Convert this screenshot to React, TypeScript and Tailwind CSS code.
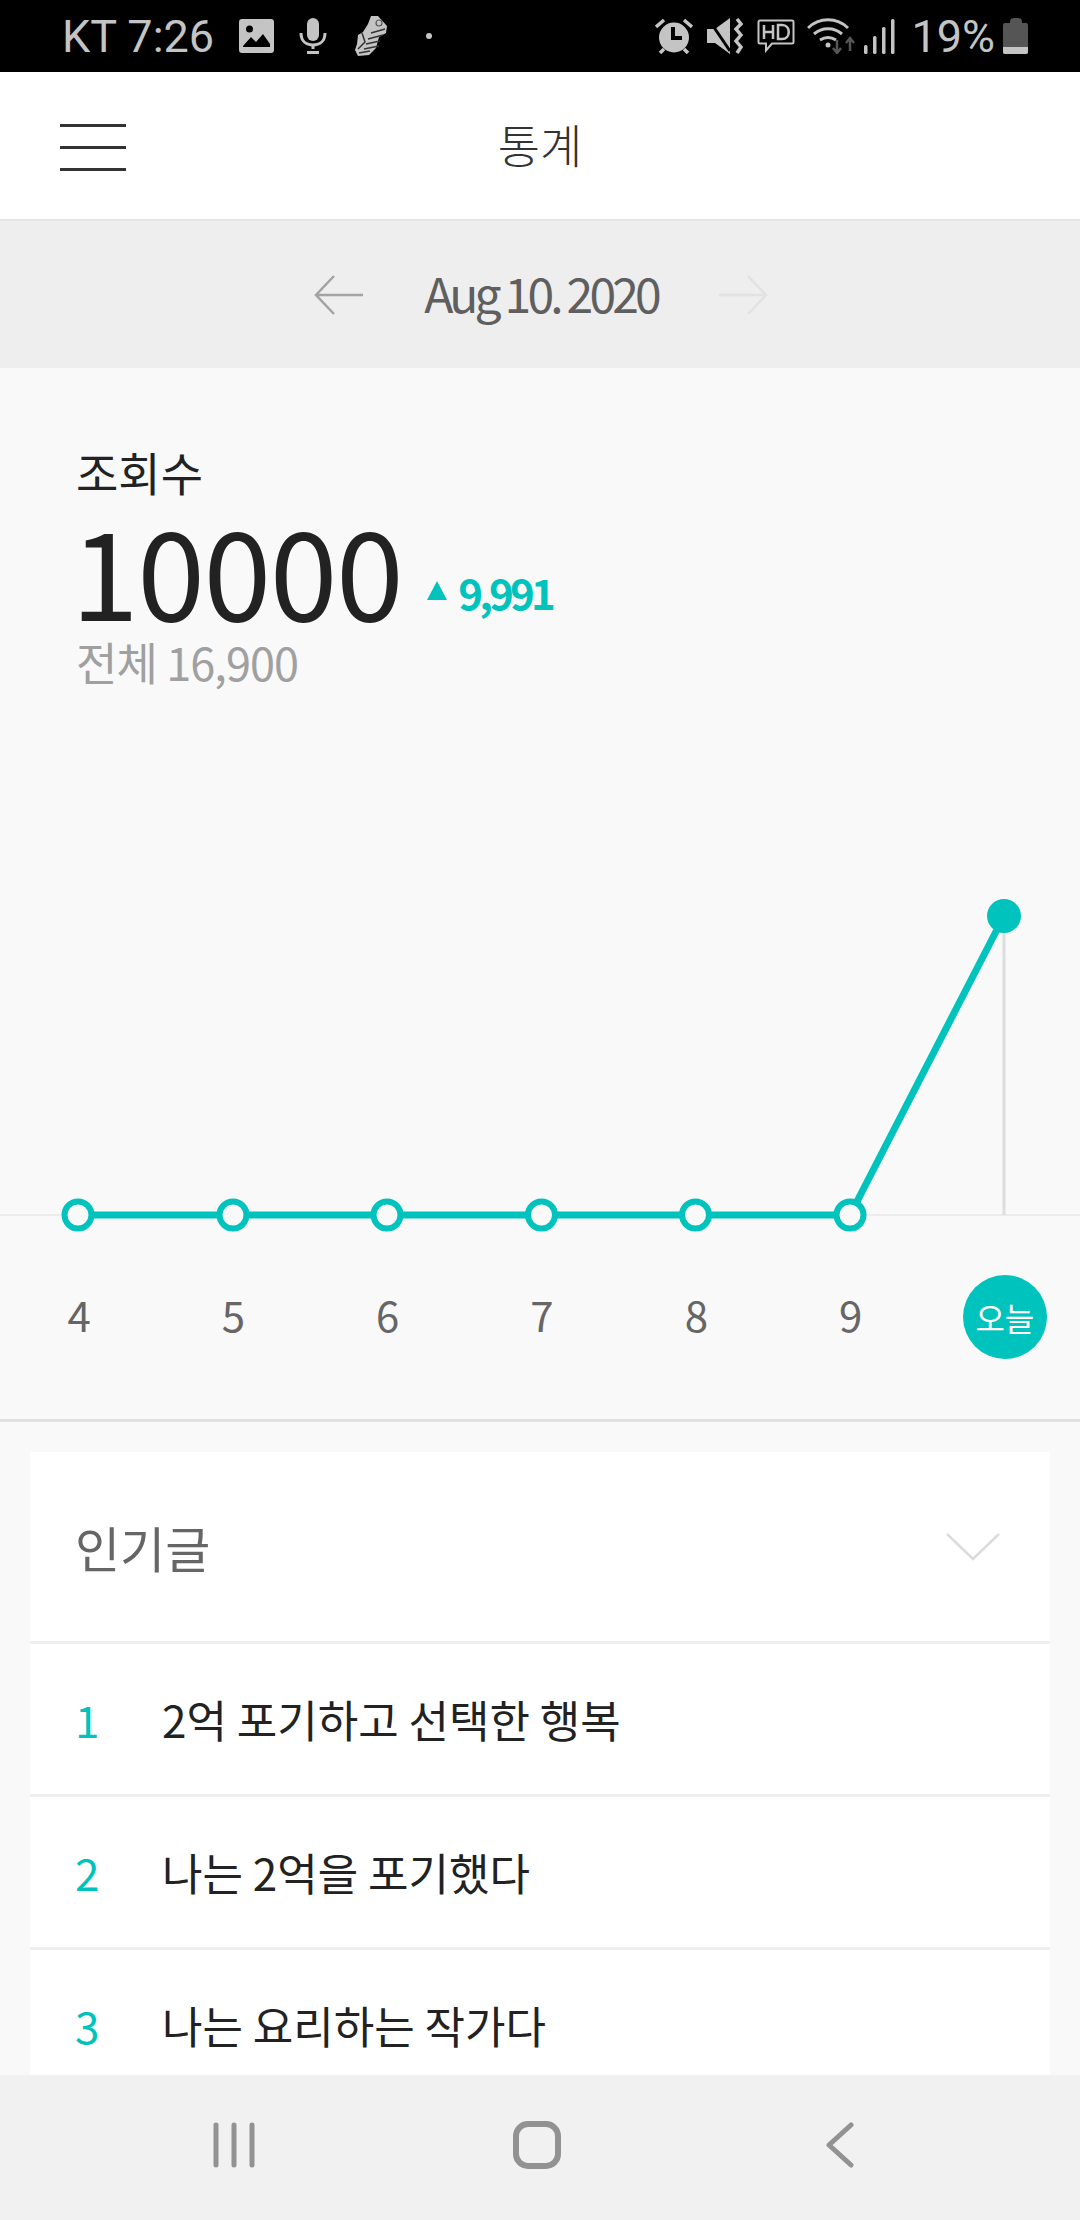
const TEAL = '#00c3bd';
const days = ['4', '5', '6', '7', '8', '9'];
const posts = ['2억 포기하고 선택한 행복', '나는 2억을 포기했다', '나는 요리하는 작가다'];

// chart x positions, one per column of the day row
const xs = [78, 233, 387, 541.5, 695.5, 850];
const TODAY_X = 1004;
const BASE = 319;
const TOP = 20;

function Chart() {
  return (
    <svg width="1080" height="340" viewBox="0 0 1080 340" className="block">
      <line x1="0" x2="1080" y1={BASE} y2={BASE} stroke="#ececec" strokeWidth="2" />
      <line x1={TODAY_X} x2={TODAY_X} y1={TOP} y2={BASE} stroke="#dedede" strokeWidth="3" />
      <polyline
        points={`78,${BASE} 850,${BASE} ${TODAY_X},${TOP}`}
        fill="none"
        stroke={TEAL}
        strokeWidth="7"
      />
      {xs.map((x) => (
        <circle key={x} cx={x} cy={BASE} r="13.5" fill="#f9f9f9" stroke={TEAL} strokeWidth="6" />
      ))}
      <circle cx={TODAY_X} cy={TOP} r="17" fill={TEAL} />
    </svg>
  );
}

function StatusLeft() {
  return (
    <div className="flex items-center text-[#c4c4c4]">
      <span className="text-[45px] leading-none font-['Roboto',sans-serif]">KT 7:26</span>
      <svg width="35" height="34" viewBox="0 0 35 34" className="ml-[25px]">
        <rect width="35" height="34" rx="3" fill="currentColor" />
        <path d="M4 27l8-9 5 5 7-8 7 10v3H4z" fill="#000" />
        <circle cx="10.500" cy="10" r="3.500" fill="#000" />
      </svg>
      <svg width="28" height="36" viewBox="0 0 28 36" className="ml-[25px]">
        <rect x="8" y="0" width="12" height="23" rx="6" fill="currentColor" />
        <path d="M2 15c0 8 5 12 12 12s12-4 12-12" fill="none" stroke="currentColor" strokeWidth="3" />
        <path d="M14 27v4M8 34.500h12" stroke="currentColor" strokeWidth="3" />
      </svg>
      {/* running shoe notification icon */}
      <svg width="34" height="42" viewBox="0 0 34 42" className="ml-[27px]">
        <path d="M17 1l7 0 9 10-1 7-7 4-3 11-7 7-11 1-3-6 2-6 1-9 5-3 5-8z" fill="currentColor" />
        <path d="M10 34l15-3M12 29l14-3M14 24l15-4M17 18l14-4M5 38l11-2" stroke="#333" strokeWidth="1.500" />
        <circle cx="25" cy="8" r="3" fill="none" stroke="#555" strokeWidth="1.200" />
        <path d="M8 18l3 9-7 7" fill="none" stroke="#333" strokeWidth="1.500" />
      </svg>
      <span className="ml-[38px] h-[6px] w-[6px] rounded-full bg-current" />
    </div>
  );
}

function StatusRight() {
  return (
    <div className="flex items-center text-[#c4c4c4]">
      <svg width="38" height="36" viewBox="0 0 38 36">
        <circle cx="19" cy="19.500" r="15" fill="currentColor" />
        <path d="M16 9v13h11v-4h-7V9z" fill="#000" />
        <path d="M1 9l8-7M37 9l-8-7M5 35l4-4M33 35l-4-4" stroke="currentColor" strokeWidth="3.500" />
      </svg>
      <svg width="36" height="36" viewBox="0 0 36 36" className="ml-[14px]">
        <path d="M0 11h8L23 0v36L8 25H0z" fill="currentColor" />
        <path d="M2 2l21 31" stroke="#000" strokeWidth="3" />
        <path d="M30 1l4 5-5 5 5 6-5 6 5 6-4 6" fill="none" stroke="currentColor" strokeWidth="3.500" />
      </svg>
      <svg width="38" height="34" viewBox="0 0 38 34" className="ml-[14px]">
        <path d="M3 1.500h32a1.500 1.500 0 0 1 1.500 1.500v20a1.500 1.500 0 0 1-1.500 1.500H15l-6 7v-7H3A1.500 1.500 0 0 1 1.500 23V3A1.500 1.500 0 0 1 3 1.500z" fill="none" stroke="currentColor" strokeWidth="2" />
        <path d="M7 6v14M16 6v14M7 13h9M21 6v14h4c9 0 9-14 0-14z" fill="none" stroke="currentColor" strokeWidth="2.500" />
      </svg>
      <svg width="48" height="36" viewBox="0 0 48 36" className="ml-[12px]">
        <path d="M1 10c11-11 29-11 40 0M7 16c8-7 20-7 28 0M13 22c5-3 11-3 16 0" fill="none" stroke="currentColor" strokeWidth="3" />
        <circle cx="21" cy="27" r="2.500" fill="currentColor" />
        <path d="M30 22v13M26 30l4 5 4-5M43 33V20M39 25l4-5 4 5" fill="none" stroke="#555" strokeWidth="2.500" />
      </svg>
      <svg width="31" height="36" viewBox="0 0 31 36" className="ml-[9px]">
        <rect x="0" y="27" width="3.500" height="9" rx="1.500" fill="currentColor" />
        <rect x="9" y="18" width="3.500" height="18" rx="1.500" fill="currentColor" />
        <rect x="18" y="9" width="3.500" height="27" rx="1.500" fill="currentColor" />
        <rect x="27" y="1" width="3.500" height="35" rx="1.500" fill="currentColor" />
      </svg>
      <span className="ml-[16px] text-[45px] leading-none font-['Roboto',sans-serif]">19%</span>
      <div className="ml-[8px] flex w-[25px] flex-col items-center">
        <div className="h-[5px] w-[12px] rounded-t-sm bg-[#555]" />
        <div className="h-[31px] w-[25px] overflow-hidden rounded-[2px] bg-[#555]">
          <div className="mt-[24px] h-[7px] bg-current" />
        </div>
      </div>
    </div>
  );
}

export default function App() {
  return (
    <div className="flex h-[2220px] w-[1080px] flex-col overflow-hidden bg-[#f9f9f9] font-['Noto_Sans_CJK_KR','Noto_Sans',sans-serif]">
      <div className="flex h-[72px] shrink-0 items-center justify-between bg-black pr-[52px] pl-[62px]">
        <StatusLeft />
        <StatusRight />
      </div>

      <header className="relative flex h-[149px] shrink-0 items-center justify-center border-b-2 border-[#e6e6e6] bg-white">
        <div className="absolute top-[52px] left-[60px] flex w-[66px] flex-col gap-[19px]">
          <span className="h-[3px] bg-[#333]" />
          <span className="h-[3px] bg-[#333]" />
          <span className="h-[3px] bg-[#333]" />
        </div>
        <h1 className="mb-[6px] text-[46px] leading-none font-light text-[#333]">통계</h1>
      </header>

      <div className="flex h-[147px] shrink-0 items-center justify-center bg-[#eeeeee]">
        <svg width="50" height="40" viewBox="0 0 50 40" fill="none" stroke="#a3a3a3" strokeWidth="2.500" className="ml-[2px]">
          <path d="M49 20H2M20 1L2 20l18 19" />
        </svg>
        <span className="mx-[60px] mb-[6px] text-[48px] leading-none tracking-[-0.08em] text-[#5f5f5f]">Aug 10. 2020</span>
        <svg width="50" height="40" viewBox="0 0 50 40" fill="none" stroke="#e2e2e2" strokeWidth="2.500">
          <path d="M1 20h47M30 1l18 19-18 19" />
        </svg>
      </div>

      <section className="h-[320px] shrink-0 pt-[78px] pl-[76px]">
        <p className="text-[46px] leading-[50px] text-[#222]">조회수</p>
        <div className="mt-[16px] flex items-center">
          <span className="-ml-[5px] text-[122px] leading-[112px] tracking-[-0.012em] text-[#222]">10000</span>
          <span className="mt-[44px] ml-[25px] h-0 w-0 border-x-[10px] border-b-[19px] border-x-transparent border-b-[#00c3bd]" />
          <span className="mt-[48px] ml-[11px] text-[42px] leading-none font-bold tracking-[-0.09em] text-[#00c3bd]">9,991</span>
        </div>
        <p className="mt-[12px] text-[45px] leading-[52px] tracking-[-0.02em] text-[#a0a0a0]">전체 16,900</p>
      </section>

      <div className="mt-[208px] shrink-0">
        <Chart />
      </div>

      <div className="ml-[2px] grid h-[160px] w-[1080px] shrink-0 grid-cols-7 items-center">
        {days.map((d) => (
          <span key={d} className="mb-[4px] text-center text-[42px] leading-none text-[#666]">
            {d}
          </span>
        ))}
        <span className="mx-auto mt-[2px] flex h-[84px] w-[84px] items-center justify-center rounded-full bg-[#00c3bd] text-[32px] text-white">
          오늘
        </span>
      </div>

      <div className="mt-[23px] shrink-0 border-t-3 border-[#e0e0e0]" />

      <main className="mx-[30px] mt-[30px] min-h-0 flex-1 overflow-hidden bg-white">
        <div className="flex h-[192px] items-center justify-between border-b-3 border-[#eeeeee] pr-[50px] pl-[45px]">
          <span className="text-[49px] leading-none text-[#666]">인기글</span>
          <svg width="54" height="28" viewBox="0 0 54 28" fill="none" stroke="#dcdcdc" strokeWidth="2.500">
            <path d="M1 1l26 25L53 1" />
          </svg>
        </div>
        {posts.map((title, i) => (
          <div key={title} className="flex h-[153px] items-center border-b-3 border-[#eeeeee] pl-[45px]">
            <span className="w-[87px] text-[44px] leading-none text-[#00c3bd]">{i + 1}</span>
            <span className="text-[44px] leading-none text-[#222]">{title}</span>
          </div>
        ))}
      </main>

      <nav className="grid h-[145px] shrink-0 grid-cols-3 items-center bg-[#f1f1f1] pb-[5px]">
        <svg width="44" height="46" viewBox="0 0 44 46" className="ml-[212px]" fill="none" stroke="#929292" strokeWidth="5" strokeLinecap="round">
          <path d="M4 3v40M22 3v40M40 3v40" />
        </svg>
        <svg width="48" height="48" viewBox="0 0 48 48" className="ml-[153px]" fill="none" stroke="#929292" strokeWidth="6">
          <rect x="3" y="3" width="42" height="42" rx="12" />
        </svg>
        <svg width="30" height="46" viewBox="0 0 30 46" className="ml-[105px]" fill="none" stroke="#929292" strokeWidth="5" strokeLinecap="round" strokeLinejoin="round">
          <path d="M26 3L4 23l22 20" />
        </svg>
      </nav>
    </div>
  );
}
